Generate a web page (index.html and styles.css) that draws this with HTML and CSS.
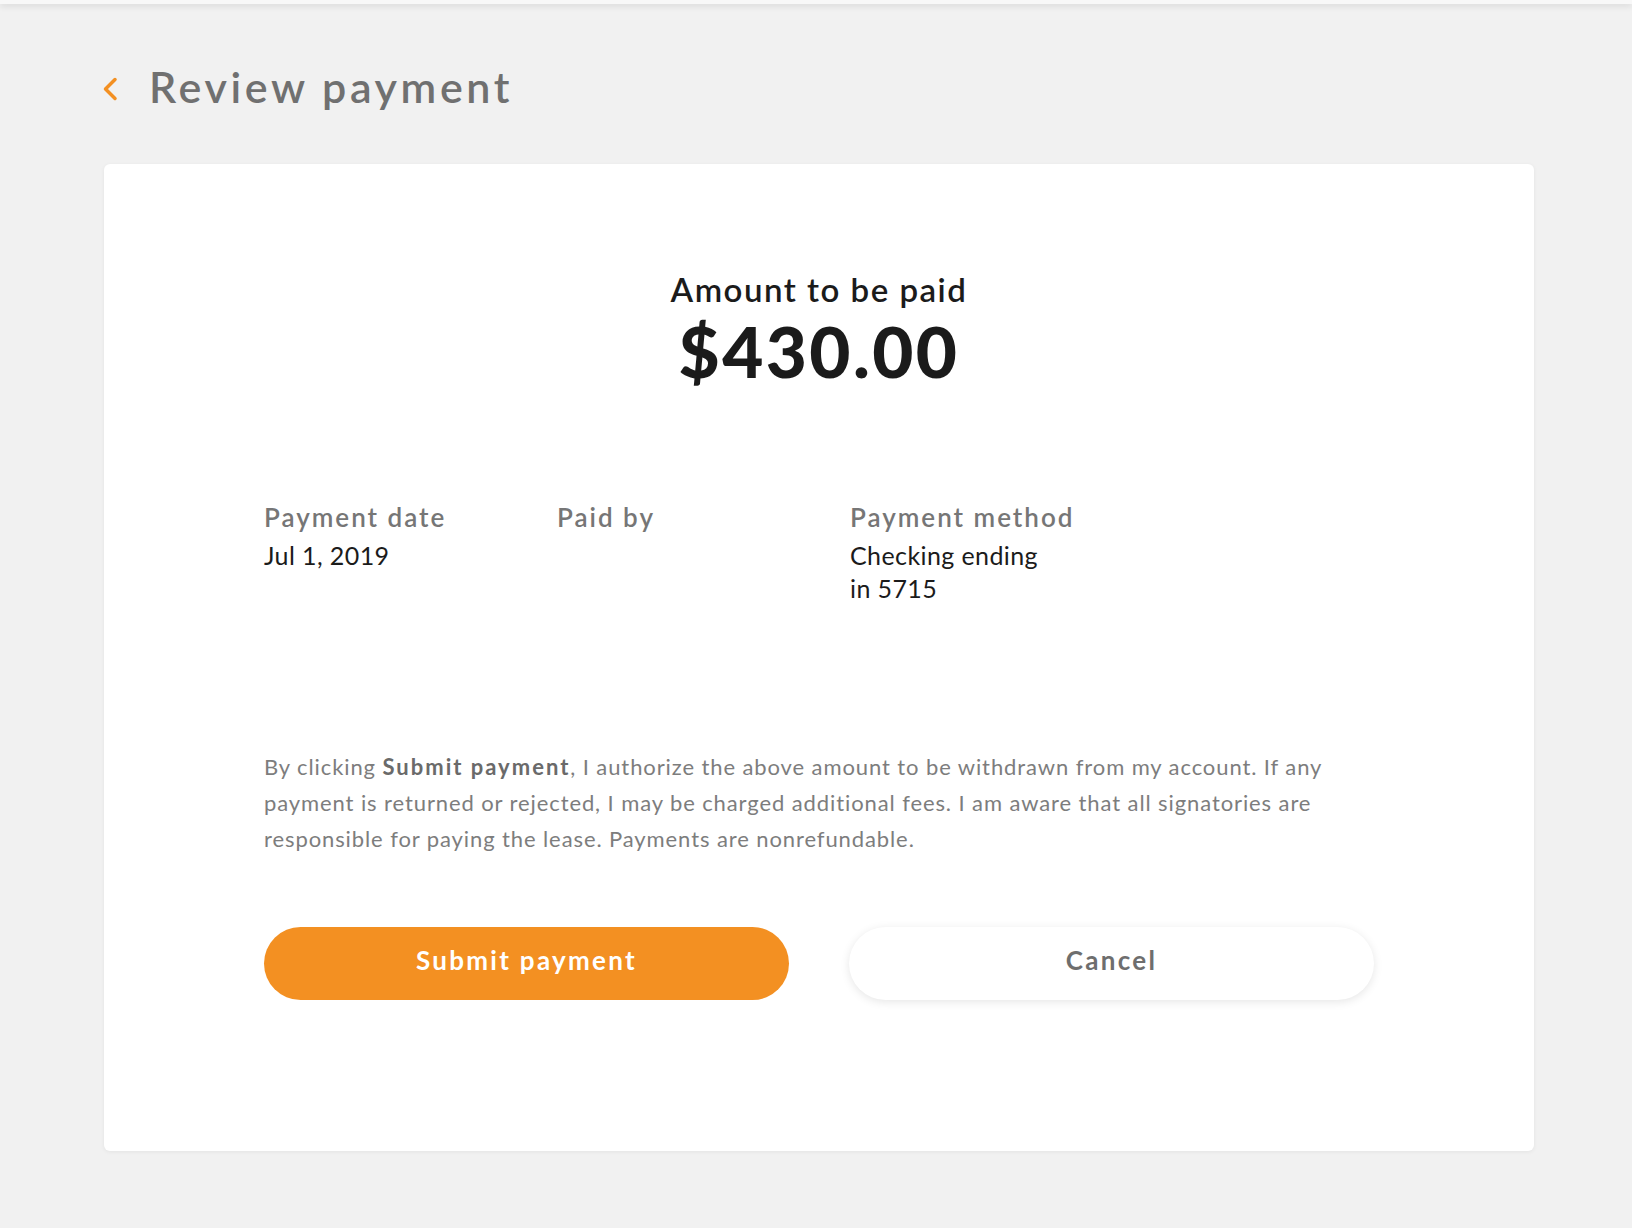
FILE: index.html
```html
<!DOCTYPE html>
<html>
<head>
    <title>Review payment</title>
    <link rel="stylesheet" href="styles.css">
</head>
<body>
    <div class="topbar"></div>
    <div class="page">
        <div class="header">
            <a class="back" href="#">
                <svg width="16" height="24" viewBox="0 0 16 24">
                    <polyline points="13,2.5 3.5,12 13,21.5" fill="none" stroke="#f39022" stroke-width="3.5" stroke-linecap="round" stroke-linejoin="round"/>
                </svg>
            </a>
            <h1>Review payment</h1>
        </div>

        <div class="card">
            <div class="amount">
                <p class="amount-label">Amount to be paid</p>
                <p class="amount-value">$430.00</p>
            </div>

            <div class="details">
                <div class="detail">
                    <p class="detail-label">Payment date</p>
                    <p class="detail-value">Jul 1, 2019</p>
                </div>
                <div class="detail">
                    <p class="detail-label">Paid by</p>
                    <p class="detail-value"></p>
                </div>
                <div class="detail">
                    <p class="detail-label">Payment method</p>
                    <p class="detail-value">Checking ending in 5715</p>
                </div>
            </div>

            <p class="terms">By clicking <strong>Submit payment</strong>, I authorize the above amount to be withdrawn from my account. If any payment is returned or rejected, I may be charged additional fees. I am aware that all signatories are responsible for paying the lease. Payments are nonrefundable.</p>

            <div class="actions">
                <button class="btn btn-primary" type="submit">Submit payment</button>
                <button class="btn btn-secondary" type="button">Cancel</button>
            </div>
        </div>
    </div>
</body>
</html>
```

FILE: styles.css
```css
body {
    font-family: Lato, "Noto Sans", sans-serif;
    margin: 0;
    padding: 0;
    background-color: #f1f1f1;
    color: #1b1b1b;
}

p {
    margin: 0;
}

.topbar {
    height: 4px;
    background-color: #f8f8f8;
    box-shadow: 0 2px 6px rgba(0, 0, 0, 0.12);
}

.page {
    padding: 0 98px 78px 104px;
}

.header {
    display: flex;
    align-items: center;
    gap: 31px;
    padding-top: 58px;
    margin-bottom: 52px;
}

.back {
    display: flex;
    margin-left: -2px;
    margin-top: 3px;
}

.header h1 {
    margin: 0;
    font-size: 43px;
    line-height: 50px;
    font-weight: 600;
    color: #707070;
    letter-spacing: 3.6px;
}

.card {
    background-color: #fff;
    border-radius: 6px;
    box-shadow: 0 1px 4px rgba(0, 0, 0, 0.06);
    padding: 105px 160px 151px;
}

.amount {
    text-align: center;
}

.amount-label {
    font-size: 33px;
    line-height: 40px;
    font-weight: 600;
    letter-spacing: 1.5px;
}

.amount-value {
    margin-top: 2px;
    font-size: 71px;
    line-height: 80px;
    font-weight: 900;
    letter-spacing: 2.4px;
}

.details {
    display: grid;
    grid-template-columns: repeat(4, 1fr);
    column-gap: 62px;
    margin-top: 110px;
}

.detail-label {
    font-size: 26px;
    line-height: 32px;
    font-weight: 600;
    color: #767676;
    letter-spacing: 2px;
}

.detail-value {
    margin-top: 6px;
    max-width: 205px;
    font-size: 25px;
    line-height: 33px;
    letter-spacing: 0.4px;
}

.terms {
    margin-top: 144px;
    font-size: 22px;
    line-height: 36px;
    color: #7d7d7d;
    letter-spacing: 0.9px;
}

.terms strong {
    color: #6a6a6a;
    letter-spacing: 2px;
}

.actions {
    display: grid;
    grid-template-columns: 1fr 1fr;
    column-gap: 60px;
    margin-top: 70px;
}

.btn {
    height: 73px;
    padding-bottom: 9px;
    border: none;
    border-radius: 37px;
    font-family: inherit;
    font-size: 26px;
    font-weight: 700;
    letter-spacing: 2.3px;
    cursor: pointer;
}

.btn-primary {
    background-color: #f39022;
    color: #fff;
}

.btn-secondary {
    background-color: #fff;
    color: #6e6e6e;
    box-shadow: 0 2px 10px rgba(0, 0, 0, 0.1);
}
```
